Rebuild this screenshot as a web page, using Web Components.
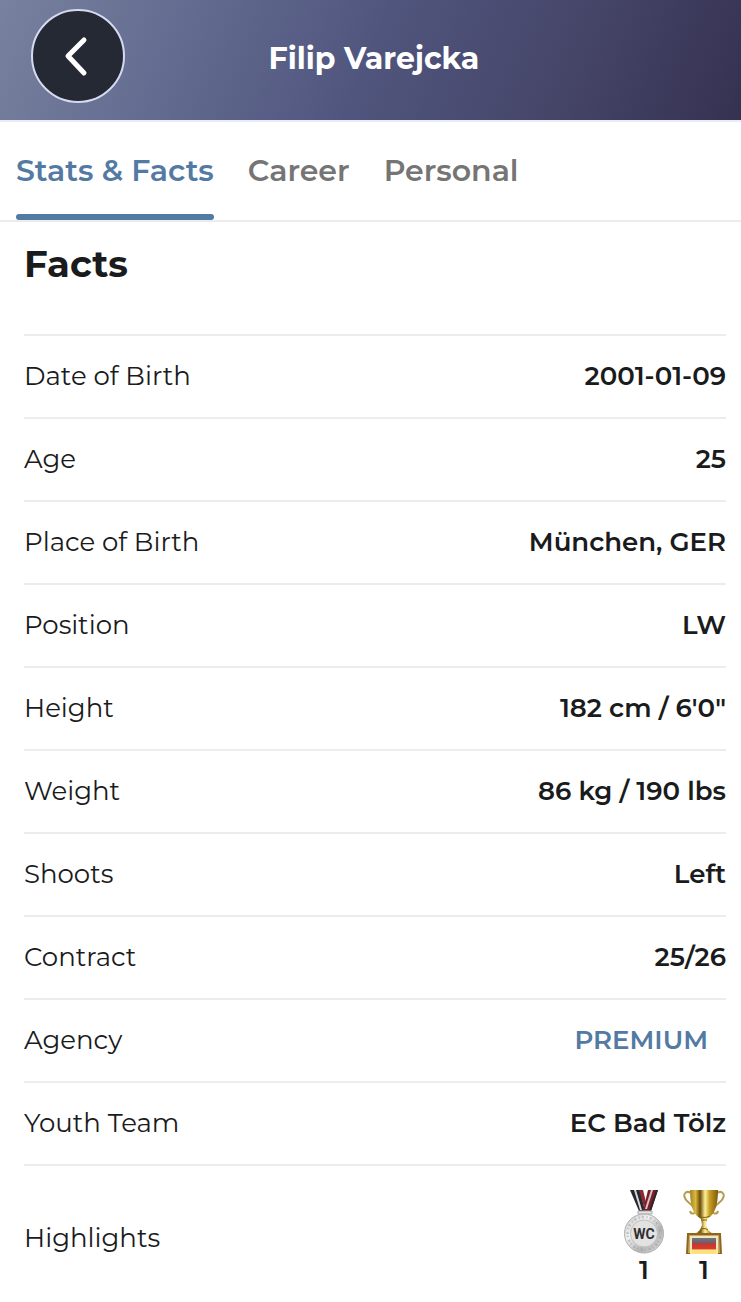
<!DOCTYPE html>
<html lang="en">
<head>
<meta charset="utf-8">
<meta name="viewport" content="width=device-width, initial-scale=1">
<title>Filip Varejcka</title>
<style>
  body {
    margin: 0;
    background: #fff;
    color: #1a1b1c;
    font-family: Montserrat, Inter, sans-serif;
    --accent: #537aa3;
    --line: #ebecec;
  }
</style>
</head>
<body>
  <page-header>Filip Varejcka</page-header>

  <tab-bar>
    <tab-link href="#stats" active>Stats &amp; Facts</tab-link>
    <tab-link href="#career">Career</tab-link>
    <tab-link href="#personal">Personal</tab-link>
  </tab-bar>

  <facts-table heading="Facts">
    <fact-value label="Date of Birth">2001-01-09</fact-value>
    <fact-value label="Age">25</fact-value>
    <fact-value label="Place of Birth">München, GER</fact-value>
    <fact-value label="Position">LW</fact-value>
    <fact-value label="Height">182 cm / 6'0"</fact-value>
    <fact-value label="Weight">86 kg / 190 lbs</fact-value>
    <fact-value label="Shoots">Left</fact-value>
    <fact-value label="Contract">25/26</fact-value>
    <fact-value label="Agency"><agency-link href="#agency">PREMIUM</agency-link></fact-value>
    <fact-value label="Youth Team">EC Bad Tölz</fact-value>
    <fact-value label="Highlights">
      <award-list>
        <award-badge type="medal">1</award-badge>
        <award-badge type="trophy">1</award-badge>
      </award-list>
    </fact-value>
  </facts-table>

<script>
// Attach an open shadow root filled with the given markup.
function render(element, html) {
  const template = document.createElement('template')
  template.innerHTML = html
  element.attachShadow({ mode: 'open' }).appendChild(template.content.cloneNode(true))
}

class PageHeader extends HTMLElement {
  constructor() {
    super()
    render(this, `
      <style>
        :host {
          display: grid;
          grid-template-columns: 94px 1fr 94px;
          align-items: center;
          box-sizing: border-box;
          height: 122px;
          padding: 0 24px 8px 31px;
          border-bottom: 2px solid #e9ebf6;
          background: linear-gradient(112deg, #78819e 0%, #636b90 25%, #50557d 50%, #454568 76%, #353151 100%);
        }
        button {
          display: grid;
          place-items: center;
          box-sizing: border-box;
          width: 94px;
          height: 94px;
          padding: 0;
          border: 2px solid #d5daf0;
          border-radius: 50%;
          background: #252934;
          color: #fff;
        }
        h1 {
          margin: 0;
          padding-top: 6px;
          color: #fff;
          font-size: 30px;
          line-height: 36px;
          font-weight: 700;
          text-align: center;
        }
      </style>
      <button type="button" aria-label="Back">
        <svg width="40" height="44" viewBox="0 0 40 44" fill="none" stroke="currentColor"
          stroke-width="5" stroke-linecap="round" stroke-linejoin="round">
          <path d="M26 6 10 22 26 39"/>
        </svg>
      </button>
      <h1><slot></slot></h1>
    `)
  }
}

class TabBar extends HTMLElement {
  constructor() {
    super()
    render(this, `
      <style>
        :host { display: block; border-bottom: 2px solid var(--line); }
        nav { display: flex; gap: 34px; padding: 0 16px; }
      </style>
      <nav><slot></slot></nav>
    `)
  }
}

class TabLink extends HTMLElement {
  constructor() {
    super()
    render(this, `
      <style>
        :host { display: block; color: #757575; }
        :host([active]) { color: var(--accent); }
        a {
          display: block;
          padding-top: 31px;
          color: inherit;
          font-size: 30px;
          line-height: 36px;
          font-weight: 600;
          text-decoration: none;
          white-space: nowrap;
        }
        a::after {
          content: '';
          display: block;
          height: 6px;
          margin-top: 25px;
          border-radius: 3px;
        }
        :host([active]) a::after { background: var(--accent); }
      </style>
      <a><slot></slot></a>
    `)
  }

  connectedCallback() {
    const link = this.shadowRoot.querySelector('a')
    link.href = this.getAttribute('href')
    if (this.hasAttribute('active')) link.setAttribute('aria-current', 'page')
  }
}

class FactsTable extends HTMLElement {
  constructor() {
    super()
    render(this, `
      <style>
        :host { display: block; padding: 18px 15px 16px 24px; }
        h2 { margin: 0 0 46px; font-size: 37px; line-height: 48px; font-weight: 700; }
        table { width: 100%; border-collapse: separate; border-spacing: 0; }
        th, td {
          padding: 24px 0;
          border-top: 2px solid var(--line);
          font-size: 26px;
          line-height: 33px;
          vertical-align: middle;
        }
        th { font-weight: 400; text-align: left; }
        td { font-weight: 600; text-align: right; }
      </style>
      <h2></h2>
      <table><tbody></tbody></table>
    `)
  }

  connectedCallback() {
    this.shadowRoot.querySelector('h2').textContent = this.getAttribute('heading')
    const body = this.shadowRoot.querySelector('tbody')
    body.replaceChildren()

    // one row per child, each child goes to the slot of its own cell
    Array.from(this.children).forEach((child, i) => {
      const row = body.insertRow()
      const label = document.createElement('th')
      label.scope = 'row'
      label.textContent = child.getAttribute('label')
      const slot = document.createElement('slot')
      slot.name = child.slot = `fact-${i}`
      row.appendChild(label)
      row.insertCell().appendChild(slot)
    })
  }
}

class FactValue extends HTMLElement {
  constructor() {
    super()
    render(this, `
      <style>:host { display: block; }</style>
      <slot></slot>
    `)
  }
}

class AgencyLink extends HTMLElement {
  constructor() {
    super()
    render(this, `
      <style>
        :host { display: block; padding-right: 18px; }
        a { color: var(--accent); text-decoration: none; }
      </style>
      <a><slot></slot></a>
    `)
  }

  connectedCallback() {
    this.shadowRoot.querySelector('a').href = this.getAttribute('href')
  }
}

class AwardList extends HTMLElement {
  constructor() {
    super()
    render(this, `
      <style>:host { display: flex; justify-content: flex-end; gap: 16px; }</style>
      <slot></slot>
    `)
  }
}

const awards = {
  medal: `
    <svg width="44" height="64" viewBox="0 0 44 64" role="img" aria-label="Silver medal">
      <defs>
        <linearGradient id="silver" x1="0" y1="0" x2="1" y2="1">
          <stop offset="0" stop-color="#c4c4c4"/><stop offset=".35" stop-color="#f1f1f1"/>
          <stop offset=".65" stop-color="#b5b5b5"/><stop offset="1" stop-color="#dedede"/>
        </linearGradient>
      </defs>
      <path d="M8 0h10l5 21h-6z" fill="#26272d"/>
      <path d="M12 0h2l6 20h-2z" fill="#d9d9dd"/>
      <path d="M17 0h4l3 12-2 5z" fill="#8d2930"/>
      <path d="M26 0h10l-7 21h-8z" fill="#76202a"/>
      <path d="M29 0h2l-6 19h-2z" fill="#ddc3c5"/>
      <path d="M34 0h2l-7 21h-2z" fill="#2b2527"/>
      <path d="M16 21h14v3H16z" fill="#e4e4e4" stroke="#aaa"/>
      <circle cx="22" cy="43.5" r="19.5" fill="url(#silver)" stroke="#b0b0b0"/>
      <circle cx="22" cy="43.5" r="16.5" fill="none" stroke="#999" stroke-width="2.5" stroke-dasharray="1 2 2 3" opacity=".5"/>
      <circle cx="22" cy="43.5" r="13.5" fill="#e2e2e2" stroke="#c0c0c0"/>
      <text x="22" y="49" text-anchor="middle" font-family="Roboto, sans-serif" font-size="14" font-weight="700" fill="#303030">WC</text>
    </svg>`,
  trophy: `
    <svg width="44" height="64" viewBox="0 0 44 64" role="img" aria-label="German championship trophy">
      <defs>
        <linearGradient id="gold">
          <stop offset="0" stop-color="#a8831c"/><stop offset=".2" stop-color="#d9b93f"/>
          <stop offset=".36" stop-color="#6b4c08"/><stop offset=".54" stop-color="#fff09a"/>
          <stop offset=".7" stop-color="#c69d23"/><stop offset="1" stop-color="#7d5a0a"/>
        </linearGradient>
        <linearGradient id="flag" x2="0" y2="1">
          <stop offset="0" stop-color="#77757c"/><stop offset=".26" stop-color="#66636c"/>
          <stop offset=".38" stop-color="#c8362f"/><stop offset=".66" stop-color="#dd3a2f"/>
          <stop offset=".76" stop-color="#f9e184"/><stop offset="1" stop-color="#fbe27a"/>
        </linearGradient>
      </defs>
      <path d="M9 3C4 0 1 4 3 8c1 4 9 7 10 12 1 4-4 5-5 1M35 3c5-3 8 1 6 5-1 4-9 7-10 12-1 4 4 5 5 1"
        fill="none" stroke="#b59b55" stroke-width="2"/>
      <path d="M8 0h28c0 12-2 21-7 26l-4 3-1 6 2 5 5 4H13l5-4 2-5-1-6-4-3C10 21 8 12 8 0z" fill="url(#gold)"/>
      <path d="M16 26c4 2 8 2 12 0M19 30h6M18 40c3-2 5-2 8 0" fill="none" stroke="#80600d"/>
      <path d="M6 44h32l1 20H5z" fill="#c9a75a" stroke="#8e6422" stroke-width="2"/>
      <path d="M8 46h28v18H8z" fill="#efe7c6"/>
      <path d="M8 58h28v6H8z" fill="#fbe9a0"/>
      <path d="M10 48h24v16H10z" fill="url(#flag)"/>
    </svg>`
}

class AwardBadge extends HTMLElement {
  constructor() {
    super()
    render(this, `
      <style>
        :host { display: flex; flex-direction: column; align-items: center; width: 44px; }
        svg { display: block; }
      </style>
      ${awards[this.getAttribute('type')]}
      <slot></slot>
    `)
  }
}

customElements.define('page-header', PageHeader)
customElements.define('tab-bar', TabBar)
customElements.define('tab-link', TabLink)
customElements.define('facts-table', FactsTable)
customElements.define('fact-value', FactValue)
customElements.define('agency-link', AgencyLink)
customElements.define('award-list', AwardList)
customElements.define('award-badge', AwardBadge)
</script>
</body>
</html>
